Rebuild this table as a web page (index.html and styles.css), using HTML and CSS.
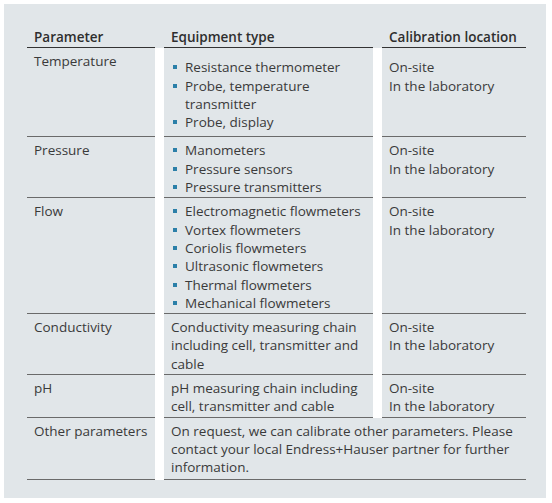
FILE: index.html
```html
<!DOCTYPE html>
<html>
<head>
<meta charset="utf-8">
<link rel="stylesheet" href="styles.css">
</head>
<body>
<div class="panel">
  <div class="thead">
    <div class="th">Parameter</div>
    <div class="th">Equipment type</div>
    <div class="th">Calibration location</div>
  </div>
  <div class="tbody">
    <div class="td">Temperature</div>
    <div class="td first">
      <ul class="list">
        <li>Resistance thermometer</li>
        <li>Probe, temperature transmitter</li>
        <li>Probe, display</li>
      </ul>
    </div>
    <div class="td first">On-site<br>In the laboratory</div>

    <div class="td">Pressure</div>
    <div class="td">
      <ul class="list">
        <li>Manometers</li>
        <li>Pressure sensors</li>
        <li>Pressure transmitters</li>
      </ul>
    </div>
    <div class="td">On-site<br>In the laboratory</div>

    <div class="td">Flow</div>
    <div class="td">
      <ul class="list">
        <li>Electromagnetic flowmeters</li>
        <li>Vortex flowmeters</li>
        <li>Coriolis flowmeters</li>
        <li>Ultrasonic flowmeters</li>
        <li>Thermal flowmeters</li>
        <li>Mechanical flowmeters</li>
      </ul>
    </div>
    <div class="td">On-site<br>In the laboratory</div>

    <div class="td">Conductivity</div>
    <div class="td">Conductivity measuring chain including cell, transmitter and cable</div>
    <div class="td">On-site<br>In the laboratory</div>

    <div class="td">pH</div>
    <div class="td">pH measuring chain including cell, transmitter and cable</div>
    <div class="td">On-site<br>In the laboratory</div>

    <div class="td">Other parameters</div>
    <div class="td span2">On request, we can calibrate other parameters. Please contact your local Endress+Hauser partner for further information.</div>
  </div>
</div>
</body>
</html>
```
FILE: styles.css
```css
html, body {
  margin: 0;
  padding: 0;
  background: #ffffff;
}
body {
  font-family: "Open Sans", "Noto Sans", sans-serif;
  font-size: 13.5px;
  line-height: 18.3px;
  color: #3a3a3a;
}
.panel {
  margin: 4px 6px 0 4px;
  width: 542px;
  height: 494px;
  box-sizing: border-box;
  background: #e1e6e9;
  padding: 24px 19px 0 23px;
}
.thead, .tbody {
  display: grid;
  grid-template-columns: 128px 209px 144px;
  column-gap: 9px;
  width: 499px;
}
.tbody {
  background: #ffffff;
}
.th {
  font-weight: 600;
  white-space: nowrap;
  padding: 0 0 1px 7px;
  border-bottom: 1.5px solid #333333;
  color: #2e2e2e;
}
.td {
  background: #e1e6e9;
  padding: 4px 2px 1px 7px;
  border-bottom: 1px solid #6a6a6a;
}
.td.first {
  padding-top: 10px;
  padding-bottom: 5px;
}
.span2 {
  grid-column: 2 / 4;
  padding-bottom: 2px;
}
.list {
  list-style: none;
  margin: 0;
  padding: 0;
}
.list li {
  position: relative;
  padding-left: 14px;
}
.list li::before {
  content: "";
  position: absolute;
  left: 2px;
  top: 7px;
  width: 4px;
  height: 4px;
  background: #2b7fa8;
}
```
